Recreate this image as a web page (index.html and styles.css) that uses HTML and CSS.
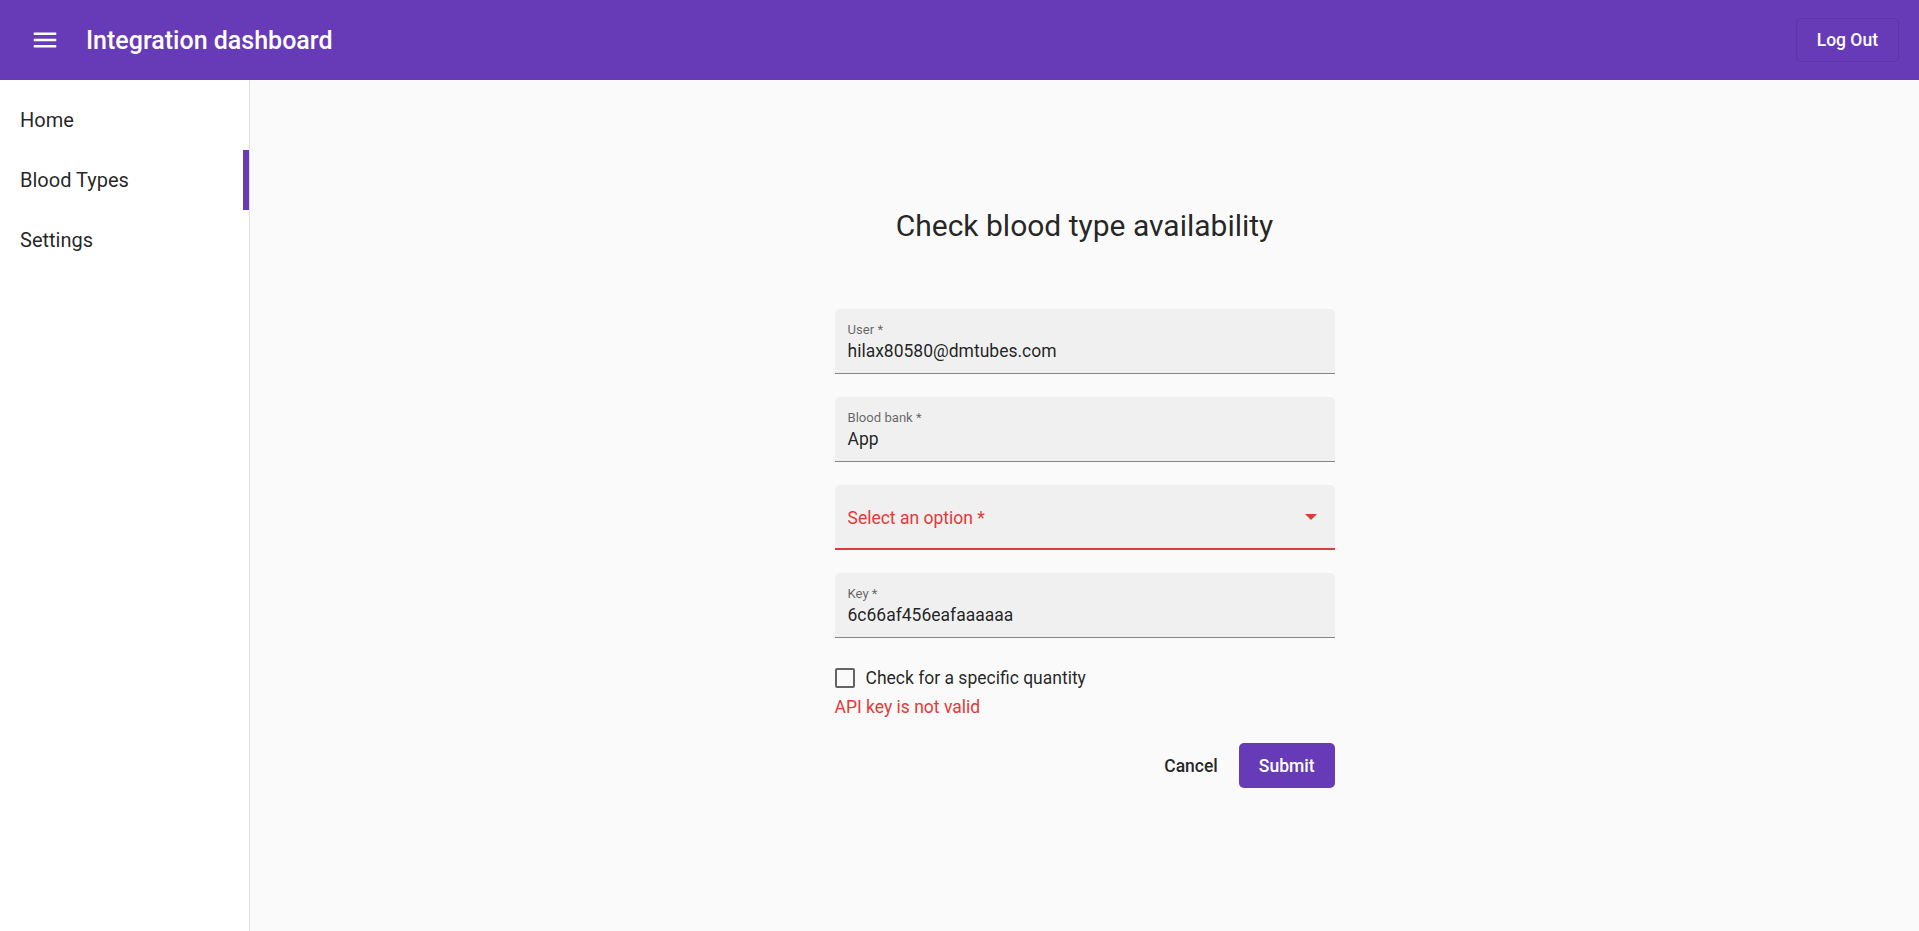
FILE: index.html
```html
<!DOCTYPE html>
<html lang="en">
<head>
<meta charset="utf-8">
<title>Integration dashboard</title>
<link rel="stylesheet" href="styles.css">
</head>
<body>
<header class="toolbar">
  <button class="icon-btn" aria-label="Menu">
    <svg width="30" height="30" viewBox="0 0 24 24"><path fill="#fff" d="M3 18h18v-2H3v2zm0-5h18v-2H3v2zm0-7v2h18V6H3z"/></svg>
  </button>
  <span class="app-title">Integration dashboard</span>
  <span class="spacer"></span>
  <button class="logout">Log Out</button>
</header>
<div class="shell">
  <nav class="sidenav">
    <a class="nav-item">Home</a>
    <a class="nav-item active">Blood Types</a>
    <a class="nav-item">Settings</a>
  </nav>
  <main class="content">
    <form class="card-form">
      <h1 class="form-title">Check blood type availability</h1>
      <div class="field">
        <div class="field-box">
          <span class="field-label">User *</span>
          <span class="field-value">hilax80580@dmtubes.com</span>
        </div>
      </div>
      <div class="field">
        <div class="field-box">
          <span class="field-label">Blood bank *</span>
          <span class="field-value">App</span>
        </div>
      </div>
      <div class="field">
        <div class="field-box select invalid">
          <span class="placeholder">Select an option *</span>
          <span class="arrow"></span>
        </div>
      </div>
      <div class="field">
        <div class="field-box">
          <span class="field-label">Key *</span>
          <span class="field-value">6c66af456eafaaaaaa</span>
        </div>
      </div>
      <label class="check-row">
        <span class="checkbox"></span>
        <span class="check-label">Check for a specific quantity</span>
      </label>
      <div class="error">API key is not valid</div>
      <div class="actions">
        <button type="button" class="btn-text">Cancel</button>
        <button type="button" class="btn-primary">Submit</button>
      </div>
    </form>
  </main>
</div>
</body>
</html>
```

FILE: styles.css
```css
* { box-sizing: border-box; }
html, body { margin: 0; height: 100%; }
body {
  font-family: Roboto, "Liberation Sans", sans-serif;
  color: rgba(0,0,0,0.87);
  background: #fafafa;
  overflow: hidden;
}
button { font-family: inherit; }

.toolbar {
  height: 80px;
  background: #673ab7;
  color: #fff;
  display: flex;
  align-items: center;
  padding: 0 20px;
}
.icon-btn {
  width: 50px;
  height: 50px;
  border: 0;
  background: transparent;
  padding: 0;
  display: flex;
  align-items: center;
  justify-content: center;
}
.app-title {
  margin-left: 16px;
  font-size: 25px;
  font-weight: 500;
}
.spacer { flex: 1; }
.logout {
  height: 44px;
  padding: 0 20px;
  background: transparent;
  color: #fff;
  border: 1px solid rgba(0,0,0,0.10);
  border-radius: 5px;
  font-size: 17.5px;
  font-weight: 500;
}

.shell {
  display: flex;
  height: calc(100% - 80px);
}
.sidenav {
  width: 250px;
  background: #fff;
  border-right: 1px solid rgba(0,0,0,0.12);
  padding-top: 10px;
  display: flex;
  flex-direction: column;
}
.nav-item {
  height: 60px;
  line-height: 60px;
  padding-left: 20px;
  font-size: 20px;
  color: rgba(0,0,0,0.87);
  position: relative;
}
.nav-item.active::after {
  content: "";
  position: absolute;
  right: 0;
  top: 0;
  width: 6px;
  height: 100%;
  background: #673ab7;
}

.content {
  flex: 1;
  background: #fafafa;
  display: flex;
  justify-content: center;
  padding-top: 128px;
}
.card-form {
  width: 500px;
  display: flex;
  flex-direction: column;
}
.form-title {
  margin: 0 0 65px;
  font-size: 30px;
  line-height: 36px;
  font-weight: 400;
  text-align: center;
  color: rgba(0,0,0,0.87);
}
.field { margin-bottom: 23px; }
.field-box {
  height: 65px;
  background: #f0f0f0;
  border-radius: 5px 5px 0 0;
  border-bottom: 1px solid rgba(0,0,0,0.45);
  padding: 0 13px;
  display: flex;
  flex-direction: column;
}
.field-label {
  font-size: 13.1px;
  line-height: 16px;
  margin-top: 13px;
  color: rgba(0,0,0,0.6);
}
.field-value {
  font-size: 17.5px;
  line-height: 22px;
  margin-top: 2px;
  color: rgba(0,0,0,0.87);
}
.field-box.select {
  flex-direction: row;
  align-items: center;
  justify-content: space-between;
  padding-right: 18px;
}
.field-box.invalid {
  border-bottom: 2.5px solid #e53935;
}
.placeholder {
  font-size: 17.5px;
  color: #e53935;
  margin-top: 2px;
}
.arrow {
  width: 0;
  height: 0;
  border-left: 6.5px solid transparent;
  border-right: 6.5px solid transparent;
  border-top: 6.5px solid #e53935;
}

.check-row {
  height: 34px;
  display: flex;
  align-items: center;
}
.checkbox {
  width: 20px;
  height: 20px;
  border: 2px solid rgba(0,0,0,0.6);
  border-radius: 2px;
  margin-right: 11px;
}
.check-label {
  font-size: 17.5px;
  line-height: 34px;
  color: rgba(0,0,0,0.87);
}
.error {
  font-size: 17.5px;
  line-height: 24px;
  color: #e53935;
}
.actions {
  margin-top: 24px;
  display: flex;
  justify-content: flex-end;
  gap: 1px;
}
.btn-text, .btn-primary {
  height: 45px;
  padding: 0 20px;
  border: 0;
  border-radius: 5px;
  font-size: 17.5px;
  font-weight: 500;
}
.btn-text {
  background: transparent;
  color: rgba(0,0,0,0.87);
}
.btn-primary {
  background: #673ab7;
  color: #fff;
}
```
